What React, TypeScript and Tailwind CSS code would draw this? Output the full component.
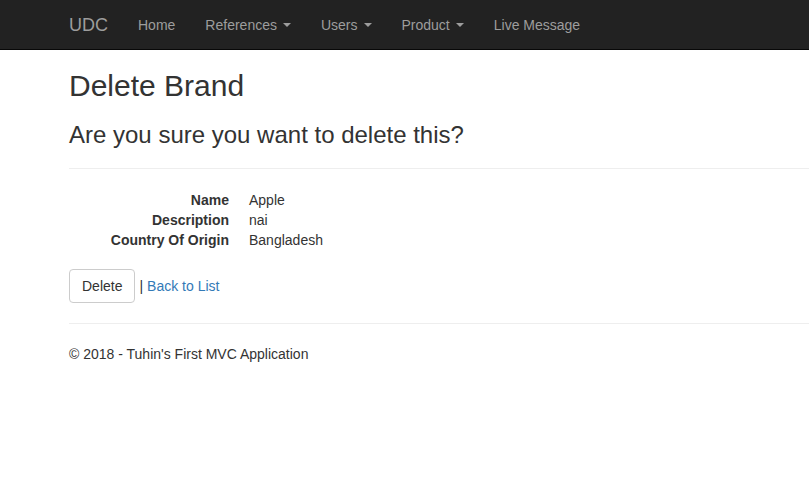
export default function App() {
  const navItems: { label: string; caret?: boolean }[] = [
    { label: 'Home' },
    { label: 'References', caret: true },
    { label: 'Users', caret: true },
    { label: 'Product', caret: true },
    { label: 'Live Message' },
  ];

  const details = [
    ['Name', 'Apple'],
    ['Description', 'nai'],
    ['Country Of Origin', 'Bangladesh'],
  ];

  return (
    <div
      className="min-h-screen bg-white text-[14px] leading-[20px] text-[#333]"
      style={{ fontFamily: '"Liberation Sans", Arial, Helvetica, sans-serif' }}
    >
      {/* Navbar */}
      <nav className="h-[50px] bg-[#222] border-b border-[#080808] box-border">
        <div className="flex pl-[54px]">
          <a className="px-[15px] py-[15px] text-[18px] leading-[20px] text-[#9d9d9d]">UDC</a>
          {navItems.map((item) => (
            <a key={item.label} className="flex items-center px-[15px] py-[15px] text-[#9d9d9d]">
              {item.label}
              {item.caret && (
                <span className="ml-[6px] inline-block w-0 h-0 border-t-[4px] border-t-[#9d9d9d] border-x-[4px] border-x-transparent" />
              )}
            </a>
          ))}
        </div>
      </nav>

      {/* Body */}
      <div className="pl-[69px]">
        <h2 className="mt-[19px] mb-[10px] text-[30px] leading-[33px] font-normal">Delete Brand</h2>
        <h3 className="mt-[20px] text-[24px] leading-[26.4px] font-normal">Are you sure you want to delete this?</h3>

        <div>
          <hr className="mt-[20px] mb-[21px] border-0 border-t border-[#eee]" />
          <dl className="mb-[19px]">
            {details.map(([k, v]) => (
              <div key={k} className="flex">
                <dt className="w-[160px] text-right font-bold">{k}</dt>
                <dd className="ml-[20px]">{v}</dd>
              </div>
            ))}
          </dl>

          <form className="flex items-center">
            <button
              type="button"
              className="h-[34px] px-[12px] py-[6px] bg-white border border-[#ccc] rounded-[4px] text-[#333] leading-[20px]"
            >
              Delete
            </button>
            <span className="ml-[4px]">|</span>
            <a className="ml-[4px] text-[#337ab7]">Back to List</a>
          </form>
        </div>

        <hr className="mt-[20px] mb-[20px] border-0 border-t border-[#eee]" />
        <footer>
          <p>© 2018 - Tuhin's First MVC Application</p>
        </footer>
      </div>
    </div>
  );
}
